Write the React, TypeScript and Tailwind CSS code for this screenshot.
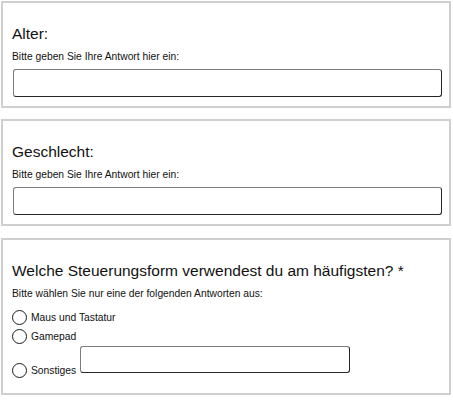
import React from 'react';

const font = { fontFamily: '"Liberation Sans", Arial, sans-serif' };

function TextBox({ className = '' }: { className?: string }) {
  return (
    <div
      className={`rounded-[3px] border-[1.5px] border-t-[#7d7d7d] border-l-[#7d7d7d] border-r-[#262626] border-b-[#262626] bg-white ${className}`}
    />
  );
}

function Radio({ label }: { label: string }) {
  return (
    <div className="flex h-[15px] items-center">
      <span className="h-[15px] w-[15px] shrink-0 rounded-full border-[1.3px] border-[#1a1a1a] bg-white" />
      <span className="ml-[4px] text-[10.3px] leading-[15px] text-[#111]">{label}</span>
    </div>
  );
}

function TextQuestion({ title, className = '' }: { title: string; className?: string }) {
  return (
    <section className={`ml-[1px] w-[450px] border-2 border-[#cfcfcf] bg-white pl-[9px] pt-[22px] pb-[9px] ${className}`}>
      <h2 className="text-[15.5px] leading-[18px] text-[#111]">{title}</h2>
      <p className="mt-[7.5px] text-[10.3px] leading-[11.5px] text-[#111]">Bitte geben Sie Ihre Antwort hier ein:</p>
      <TextBox className="mt-[7px] ml-[1px] h-[28px] w-[429px]" />
    </section>
  );
}

export default function App() {
  return (
    <div className="min-h-[406px] w-[453px] bg-white pt-[1px]" style={font}>
      <TextQuestion title="Alter:" />
      <TextQuestion title="Geschlecht:" className="mt-[11px]" />

      <section className="ml-[1px] mt-[12px] w-[450px] border-2 border-[#cfcfcf] bg-white pl-[9px] pt-[22px] pb-[15px]">
        <h2 className="text-[15.5px] leading-[18px] text-[#111]">
          Welche Steuerungsform verwendest du am häufigsten? *
        </h2>
        <p className="mt-[8px] text-[10.3px] leading-[11.5px] text-[#111]">
          Bitte wählen Sie nur eine der folgenden Antworten aus:
        </p>
        <div className="mt-[10px]">
          <Radio label="Maus und Tastatur" />
        </div>
        <div className="mt-[4px]">
          <Radio label="Gamepad" />
        </div>
        <div className="mt-[2px] flex h-[32px] items-end">
          <Radio label="Sonstiges" />
          <TextBox className="mb-[5px] ml-[4px] h-[27px] w-[270px]" />
        </div>
      </section>
    </div>
  );
}
